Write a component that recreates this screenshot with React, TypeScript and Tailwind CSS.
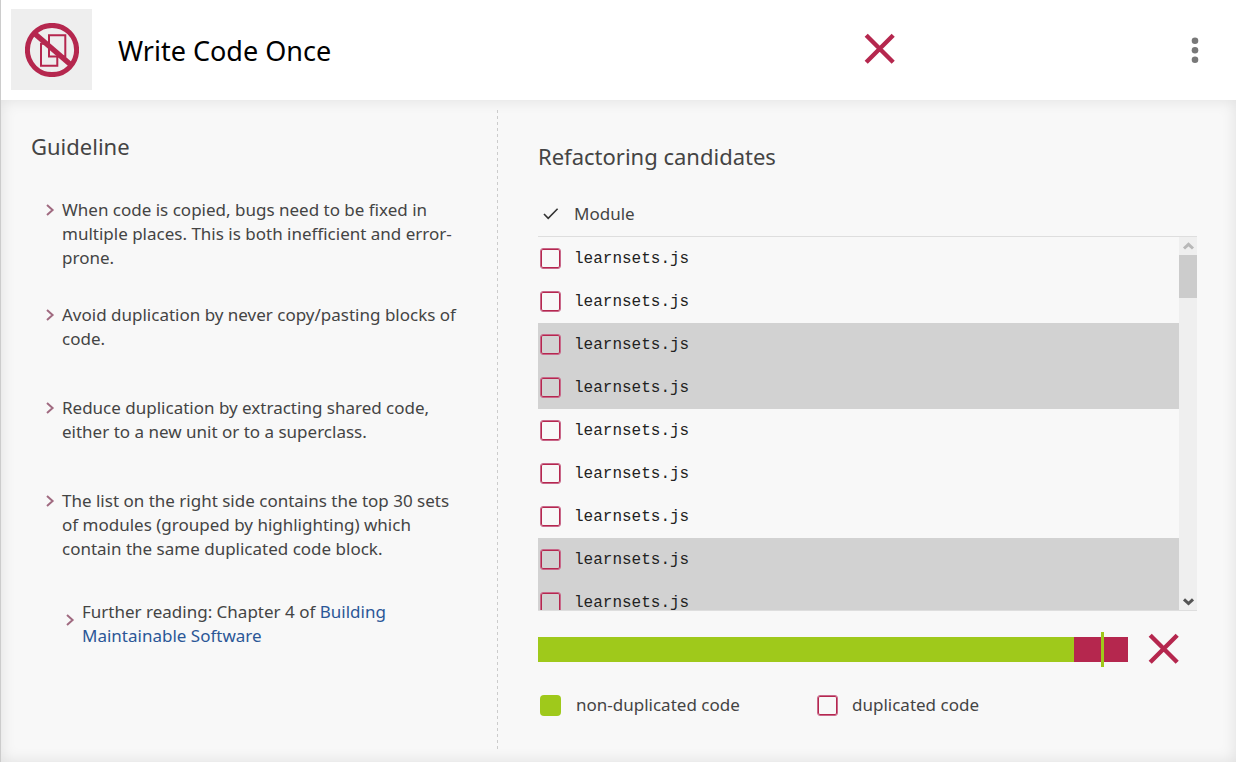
import React from "react";

const guidelines = [
  "When code is copied, bugs need to be fixed in multiple places. This is both inefficient and error-prone.",
  "Avoid duplication by never copy/pasting blocks of code.",
  "Reduce duplication by extracting shared code, either to a new unit or to a superclass.",
  "The list on the right side contains the top 30 sets of modules (grouped by highlighting) which contain the same duplicated code block.",
];

const modules = [
  { name: "learnsets.js", highlighted: false },
  { name: "learnsets.js", highlighted: false },
  { name: "learnsets.js", highlighted: true },
  { name: "learnsets.js", highlighted: true },
  { name: "learnsets.js", highlighted: false },
  { name: "learnsets.js", highlighted: false },
  { name: "learnsets.js", highlighted: false },
  { name: "learnsets.js", highlighted: true },
  { name: "learnsets.js", highlighted: true },
];

function Cross() {
  return (
    <svg viewBox="0 0 32 32" className="size-8 shrink-0" fill="none" stroke="#b5274e" strokeWidth="4.4" aria-hidden="true">
      <path d="M2.2 2.2 29.2 29.2M29.2 2.2 2.2 29.2" />
    </svg>
  );
}

function Chevron() {
  return (
    <svg viewBox="0 0 10 14" className="h-3.5 w-2.5 shrink-0" fill="none" stroke="#a06a80" strokeWidth="2" aria-hidden="true">
      <path d="M2 2 7.6 7 2 12" />
    </svg>
  );
}

function NoDuplicatesLogo() {
  return (
    <svg viewBox="0 0 54 54" className="size-[54px]" fill="none" stroke="#b5274e" aria-hidden="true">
      <g strokeWidth="2">
        <path d="M24 12.2H40.3V33.5H24Z" />
        <path d="M24 20.8H16V42.8H32.3V33.5" />
      </g>
      <circle cx="27" cy="27" r="24.6" strokeWidth="5" />
      <path d="M9.5 10.5 45.5 41.5" strokeWidth="5.4" />
    </svg>
  );
}

function Header() {
  return (
    <header className="flex h-[100px] shrink-0 items-center bg-white pb-px pl-2.5 pr-6">
      <div className="flex size-[81px] shrink-0 items-center justify-center bg-[#eeeeee]">
        <NoDuplicatesLogo />
      </div>
      <h1 className="ml-[26px] flex-1 pt-0.5 text-[27px] leading-8 text-black">Write Code Once</h1>
      <div className="flex w-[314px] pb-0.5">
        <Cross />
      </div>
      <button type="button" aria-label="More options" className="flex h-9 w-[34px] items-center justify-center">
        <svg viewBox="0 0 8 26" className="h-[26px] w-2" fill="#787878" aria-hidden="true">
          <circle cx="4" cy="3.8" r="3.3" />
          <circle cx="4" cy="13.3" r="3.3" />
          <circle cx="4" cy="22.7" r="3.3" />
        </svg>
      </button>
    </header>
  );
}

function Guideline() {
  return (
    <section className="flex flex-1 flex-col pl-[30px] pr-7 pt-5">
      <h2 className="text-[22px] leading-8 text-[#444444]">Guideline</h2>
      <ul className="mt-9 flex flex-col gap-[45px] pl-3.5">
        {guidelines.map((text) => (
          <li key={text} className="flex gap-[7px] first:-mb-3">
            <span className="flex h-6 items-center">
              <Chevron />
            </span>
            <span>{text}</span>
          </li>
        ))}
      </ul>
      <div className="mt-[38px] flex gap-[7px] pl-[34px] pr-14 pt-px">
        <span className="flex h-10 items-center">
          <Chevron />
        </span>
        <p>
          Further reading: Chapter 4 of{" "}
          <a href="#book" className="text-[#2b5797]">
            Building Maintainable Software
          </a>
        </p>
      </div>
    </section>
  );
}

function ModuleTable() {
  return (
    <div className="mt-5 flex border-b border-[#dedede]">
      <table className="flex flex-1 flex-col">
        <thead className="block border-b border-[#dedede]">
          <tr className="flex h-11 items-center">
            <th className="flex w-9 pl-1 font-normal">
              <svg viewBox="0 0 18 14" className="h-3.5 w-[18px]" fill="none" stroke="#333333" strokeWidth="1.6" role="img" aria-label="Done">
                <path d="M2 7 6.2 11.4 15.6 1.8" />
              </svg>
            </th>
            <th className="font-normal">Module</th>
          </tr>
        </thead>
        <tbody className="block h-[373px] overflow-y-auto [scrollbar-width:none]">
          {modules.map((module, index) => (
            <tr key={index} className={module.highlighted ? "flex h-[43px] items-center bg-[#d2d2d2]" : "flex h-[43px] items-center"}>
              <td className="flex w-9 pl-0.5">
                <input
                  type="checkbox"
                  id={`module-${index}`}
                  className="size-[21px] appearance-none rounded-[3px] border border-[#c9688a] shadow-[inset_0_0_0_1px_#b5274e] checked:bg-[#b5274e]"
                />
              </td>
              <td className="font-['Liberation_Mono',monospace] text-base text-[#222222]">
                <label htmlFor={`module-${index}`}>{module.name}</label>
              </td>
            </tr>
          ))}
        </tbody>
      </table>
      <div className="flex h-[374px] w-[18px] flex-col self-end border-t border-[#dedede] bg-[#efefef]" aria-hidden="true">
        <svg viewBox="0 0 18 18" className="size-[18px]" fill="none" stroke="#b8b8b8" strokeWidth="3">
          <path d="M5 11.5 9.5 7.3 14 11.5" />
        </svg>
        <div className="h-[43px] bg-[#cccccc]" />
        <svg viewBox="0 0 18 18" className="mt-auto size-[18px]" fill="none" stroke="#555555" strokeWidth="3">
          <path d="M5 7.3 9.5 11.5 14 7.3" />
        </svg>
      </div>
    </div>
  );
}

function DuplicationBar() {
  return (
    <div className="mt-[22px] flex items-center gap-5 pr-[17px]">
      <div className="relative flex h-[25px] flex-1 bg-[#b5274e]">
        <div className="bg-[#9fc91b]" style={{ width: "90.8%" }} />
        <div className="absolute -inset-y-[5px] w-[3px] bg-[#9fc91b]" style={{ left: "95.4%" }} />
      </div>
      <Cross />
    </div>
  );
}

function Legend() {
  return (
    <div className="mt-7 flex pl-0.5">
      <div className="flex w-[277px] items-center gap-[15px]">
        <span className="size-[21px] rounded-sm bg-[#9fc91b]" />
        <span>non-duplicated code</span>
      </div>
      <div className="flex items-center gap-3.5">
        <span className="size-[21px] rounded-[3px] border border-[#c9688a] shadow-[inset_0_0_0_1px_#b5274e]" />
        <span>duplicated code</span>
      </div>
    </div>
  );
}

export default function App() {
  return (
    <div className="flex min-h-screen flex-col border-l border-[#cccccc] bg-[#f8f8f8] font-['Noto_Sans',sans-serif] text-[17px] leading-6 text-[#444444]">
      <Header />
      <main className="grid flex-1 grid-cols-[497fr_738fr] py-2.5 shadow-[inset_0_0_15px_rgba(0,0,0,0.1)]">
        <div className="flex">
          <Guideline />
          <div className="w-px bg-[repeating-linear-gradient(to_bottom,#cccccc_0px,#cccccc_3px,transparent_3px,transparent_6px)]" />
        </div>
        <section className="pl-10 pr-[39px] pt-[30px]">
          <h2 className="text-[22px] leading-8 text-[#444444]">Refactoring candidates</h2>
          <ModuleTable />
          <DuplicationBar />
          <Legend />
        </section>
      </main>
    </div>
  );
}
